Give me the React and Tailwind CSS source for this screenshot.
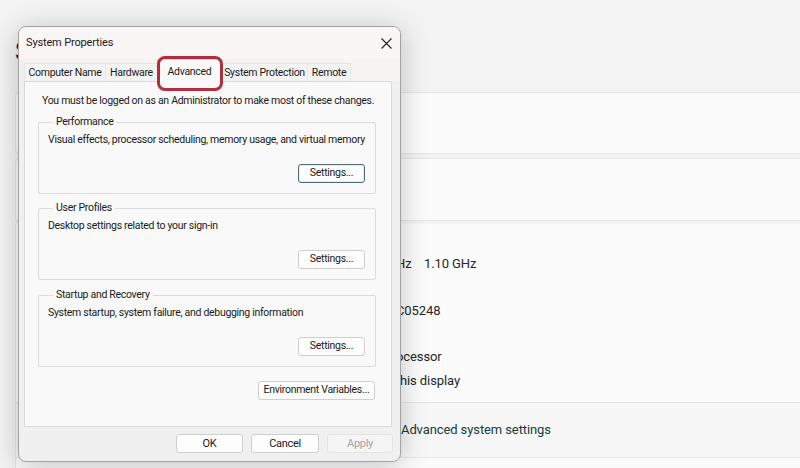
import React from "react";

const rows = [
  { label: "Device name", prefix: "DESKTOP-7HQ2LMP", suffix: "", shift: "" },
  { label: "Processor", prefix: "Intel(R) Core(TM) i5-1035G1 CPU @ 1.00G", suffix: "Hz    1.10 GHz", shift: "" },
  { label: "Installed RAM", prefix: "8.00 GB (7.78 GB usable)", suffix: "", shift: "" },
  { label: "Device ID", prefix: "8F2A61D4-93B7-4E0C-A1F5-2D7", suffix: "C05248", shift: "" },
  { label: "Product ID", prefix: "00342-42631-21585-AAOEM", suffix: "", shift: "" },
  { label: "System type", prefix: "64-bit operating system, x64-based pr", suffix: "ocessor", shift: "" },
  { label: "Pen and touch", prefix: "No pen or touch input is available for t", suffix: "his display", shift: "ml-[4px]" },
];

const Btn = ({ children, className = "", disabled = false, focused = false }) => (
  <button
    className={
      "h-[19px] rounded-[3px] border text-[10.5px] leading-none whitespace-nowrap " +
      (disabled
        ? "bg-[#f5f5f5] border-[#e3e3e3] text-[#a3a3a3] "
        : focused
        ? "bg-[#fdfdfd] border-[#4d6a70] text-[#1a1a1a] shadow-[inset_0_0_0_1px_#e8eef0] "
        : "bg-[#fdfdfd] border-[#cfcfcf] text-[#1a1a1a] ") +
      className
    }
  >
    {children}
  </button>
);

const Group = ({ title, text, className = "", focused = false }) => (
  <fieldset className={"border border-[#dcdcdc] rounded-[2px] pl-[9px] pr-[10px] pb-[10px] " + className}>
    <legend className="ml-[5px] px-[3px] leading-[14px] text-[#1a1a1a] whitespace-nowrap">{title}</legend>
    <p className="pt-[4px] leading-[14px] text-[#1a1a1a] whitespace-nowrap">{text}</p>
    <div className="mt-[17px] flex justify-end">
      <Btn focused={focused} className="w-[67px]">Settings...</Btn>
    </div>
  </fieldset>
);

export default function App() {
  return (
    <div className="relative w-[800px] h-[468px] overflow-hidden bg-[#f3f3f3] font-['Roboto',sans-serif] text-[#1b1b1b]">
      {/* SETTINGS PAGE BEHIND */}
      <div className="w-[830px] pl-[15px]">
        <div className="h-[92px] pt-[36px]">
          <h1 className="text-[28px] font-semibold leading-[32px] text-[#1b1b1b]">System &gt; About</h1>
        </div>

        <div className="h-[62px] rounded-[4px] border border-[#e6e6e6] bg-[#fbfbfb] flex items-center pl-[56px]">
          <span className="text-[13px]">DESKTOP-7HQ2LMP</span>
        </div>

        <div className="mt-[4px] h-[63px] rounded-t-[4px] border border-[#e6e6e6] bg-[#fbfbfb] flex items-center pl-[56px]">
          <span className="text-[13px] font-semibold">Device specifications</span>
        </div>

        <div className="mt-[3px] border-x border-b border-[#e6e6e6] bg-[#fbfbfb] pt-[5px] pb-[10px] text-[13px] tracking-[-0.1px] text-[#262626]">
          {rows.map((r) => (
            <div key={r.label} className="h-[23.3px] flex items-center pl-[40px] whitespace-nowrap">
              <span className="w-[150px] shrink-0">{r.label}</span>
              <span className="w-[190px] shrink-0 overflow-hidden text-right">{r.prefix}</span>
              <span className={"whitespace-pre " + r.shift}>{r.suffix}</span>
            </div>
          ))}
        </div>

        <div className="h-[55px] border-x border-b border-[#e6e6e6] bg-[#f7f7f7] flex items-center text-[13px] tracking-[-0.1px] whitespace-nowrap">
          <div className="w-[385px] shrink-0 pl-[40px] flex gap-[24px] overflow-hidden">
            <span className="font-semibold">Related links</span>
            <span className="text-[#24403f]">Domain or workgroup</span>
            <span className="text-[#24403f]">System protection</span>
          </div>
          <span className="text-[#213a3a]">Advanced system settings</span>
        </div>

        <div className="h-[20px] border-x border-[#e6e6e6] bg-[#fbfbfb]" />
      </div>

      {/* SYSTEM PROPERTIES DIALOG */}
      <div className="absolute left-[18px] top-[26px] w-[383px] h-[436px] rounded-[8px] border border-[#a3a3a3] bg-[#f1f0f0] shadow-[0_4px_28px_rgba(0,0,0,0.22)] flex flex-col overflow-hidden text-[10.5px] tracking-[-0.3px]">
        <div className="h-[32px] shrink-0 flex items-center justify-between pl-[7px] pr-[8px] bg-[#fbf6f6]">
          <span className="text-[11px] tracking-[-0.15px] text-[#1a1a1a]">System Properties</span>
          <svg width="11" height="11" viewBox="0 0 11 11" className="text-[#222]">
            <path d="M0.5 0.5 L10.5 10.5 M10.5 0.5 L0.5 10.5" stroke="currentColor" strokeWidth="1.1" fill="none" />
          </svg>
        </div>

        {/* TABS */}
        <div className="h-[22px] shrink-0 flex items-end ml-[5px] bg-[#f6f3f3] whitespace-nowrap">
          <div className="w-[81px] h-[18px] flex items-center justify-center border-t border-l border-[#e6e6e6] bg-[#f3f3f3]">Computer Name</div>
          <div className="w-[52px] h-[18px] flex items-center justify-center border-t border-l border-[#e6e6e6] bg-[#f3f3f3]">Hardware</div>
          <div className="relative w-[65px] h-[23px] -mb-[1px] flex items-start pt-[4px] justify-center border-x border-t border-[#dadada] bg-[#f9f9f9] z-10">
            Advanced
            <div className="absolute -left-[1px] -right-[2px] -top-[4px] -bottom-[9px] rounded-[8px] border-[3px] border-[#b02f3c]" />
          </div>
          <div className="w-[86px] h-[18px] flex items-center justify-center border-t border-r border-[#e6e6e6] bg-[#f3f3f3]">System Protection</div>
          <div className="w-[43px] h-[18px] flex items-center justify-center border-t border-r border-[#e6e6e6] bg-[#f3f3f3]">Remote</div>
        </div>

        {/* TAB PANEL */}
        <div className="ml-[5px] mr-[8px] h-[346px] shrink-0 border border-[#dadada] bg-[#f9f9f9] pl-[13px] pr-[15px] pt-[12px]">
          <p className="pl-[4px] leading-[14px] text-[#1a1a1a] whitespace-nowrap">
            You must be logged on as an Administrator to make most of these changes.
          </p>
          <Group
            className="mt-[7px]"
            focused
            title="Performance"
            text="Visual effects, processor scheduling, memory usage, and virtual memory"
          />
          <Group className="mt-[7px]" title="User Profiles" text="Desktop settings related to your sign-in" />
          <Group
            className="mt-[8px]"
            title="Startup and Recovery"
            text="System startup, system failure, and debugging information"
          />
          <div className="mt-[14px] flex justify-end pr-[1px]">
            <Btn className="w-[117px]">Environment Variables...</Btn>
          </div>
        </div>

        {/* FOOTER */}
        <div className="flex justify-end gap-[8px] pr-[7px] pt-[7px]">
          <Btn className="w-[67px] text-[11px]">OK</Btn>
          <Btn className="w-[68px] text-[11px]">Cancel</Btn>
          <Btn disabled className="w-[66px] text-[11px]">Apply</Btn>
        </div>
      </div>
    </div>
  );
}
